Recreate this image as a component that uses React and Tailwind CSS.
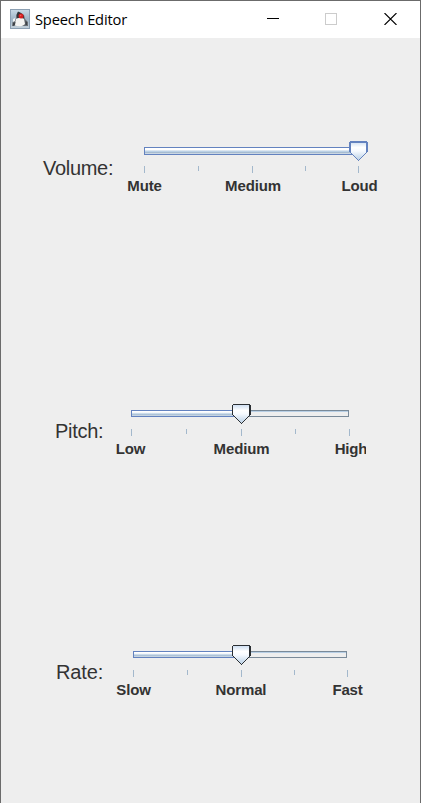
import React from 'react';

function JavaIcon() {
  return (
    <svg width="20" height="20" viewBox="0 0 20 20">
      <defs>
        <linearGradient id="iconBg" x1="0" y1="0" x2="0" y2="1">
          <stop offset="0" stopColor="#c9dae6" />
          <stop offset="0.5" stopColor="#9fb5c6" />
          <stop offset="1" stopColor="#c3d0da" />
        </linearGradient>
      </defs>
      <rect x="0.5" y="0.5" width="19" height="19" fill="url(#iconBg)" stroke="#8b9fb2" />
      <path d="M2 17 L2.5 13 L6 10 L6 6 L8 3 L11 4 L14 6 L15 10 L18 13 L18 17 Z" fill="#686e74" />
      <path d="M8 2.5 L11 4 L14 7 L14 9.5 L7 9.5 L7 5 Z" fill="#33373c" />
      <path d="M6 10 C8 8.6 12 8.6 14 10 L15 15 C12.5 18 8 17.5 4.5 16.5 Z" fill="#f4f4f2" />
      <path d="M3 10 L5 9 L5 12 L3 13 Z" fill="#eef1f2" />
      <path d="M3 14 L5.5 13 L5 16 L3 17 Z M15.5 12 L17 13 L17 16 L15.5 16 Z" fill="#3e4348" />
      <circle cx="11" cy="7" r="2.5" fill="#d81f20" />
      <circle cx="10.6" cy="6.5" r="0.8" fill="#f4605c" />
    </svg>
  );
}

function TitleBar() {
  return (
    <header className="flex h-[37px] shrink-0 items-center bg-white pb-px pl-[9px] pr-[23px]">
      <JavaIcon />
      <h1 className="ml-[5px] flex-1 whitespace-nowrap font-['Open_Sans',sans-serif] text-[14.7px] leading-5 tracking-[-0.18px] text-black">
        Speech Editor
      </h1>
      <div className="flex items-center">
        <svg width="12" height="12" shapeRendering="crispEdges">
          <path d="M0 5.5H12" stroke="#000" />
        </svg>
        <svg className="ml-[46px]" width="12" height="12" shapeRendering="crispEdges">
          <rect x="0.5" y="0.5" width="11" height="11" fill="none" stroke="#ccc" />
        </svg>
        <svg className="ml-[47px]" width="13" height="12" viewBox="0 0 13 12">
          <path d="M0.5 0L12.5 12M12.5 0L0.5 12" stroke="#000" strokeWidth="1.1" />
        </svg>
      </div>
    </header>
  );
}

function Thumb({ id, focused }) {
  const edge = focused ? '#6382bf' : '#2b2f33';
  return (
    <svg width="19" height="20" viewBox="0 0 19 20">
      <defs>
        <linearGradient id={id} x1="0" y1="0" x2="0" y2="1">
          <stop offset="0" stopColor="#cfdff2" />
          <stop offset="0.3" stopColor="#ffffff" />
          <stop offset="0.5" stopColor="#f6faff" />
          <stop offset="1" stopColor="#b8cfe5" />
        </linearGradient>
      </defs>
      <path d="M1 1H17.5V11L9.5 19L1 11Z" fill={`url(#${id})`} />
      <path
        d="M1 0H18V1H1ZM0 1H1V11H0ZM17 1H19V11H17ZM1 11H2V12H1ZM2 12H3V13H2ZM3 13H4V14H3ZM4 14H5V15H4ZM5 15H6V16H5ZM6 16H7V17H6ZM7 17H8V18H7ZM8 18H9V19H8ZM9 19H10V20H9ZM17 11H18V12H17ZM16 12H17V13H16ZM15 13H16V14H15ZM14 14H15V15H14ZM13 15H14V16H13ZM12 16H13V17H12ZM11 17H12V18H11ZM10 18H11V19H10Z"
        fill={edge}
        shapeRendering="crispEdges"
      />
      {focused && <path d="M1 1H18V2H1ZM1 2H2V11H1Z" fill={edge} shapeRendering="crispEdges" />}
    </svg>
  );
}

function Slider({ id, labels, width, track, fill, thumb, focused, tickGap, labelClip = '' }) {
  return (
    <div className={`flex flex-col ${width}`}>
      <div className={`relative flex ${track}`}>
        <div className={`border border-[#6382bf] bg-[linear-gradient(#fff_0%,#fff_25%,#d5e2ee_45%,#b8cfe5_60%,#a3b8cc_78%,#e4ebf2_100%)] ${fill}`} />
        {!focused && <div className="flex-1 border border-l-0 border-[#7a8a99] shadow-[inset_0_1px_0_#b8cfe5]" />}
        <div className={`absolute -top-[6px] ${thumb}`}>
          <Thumb id={id} focused={focused} />
        </div>
      </div>
      <div className={`flex h-[7px] justify-between ${tickGap}`}>
        {[0, 1, 2, 3, 4].map((i) => (
          <span
            key={i}
            className={`w-px bg-[#a3b8cc] ${i % 2 ? 'h-[5px]' : 'h-[7px]'} ${i === 2 ? 'relative left-px' : ''}`}
          />
        ))}
      </div>
      <div className={`mt-1 flex justify-between text-[15px] font-bold leading-[18px] tracking-[-0.15px] ${labelClip}`}>
        {labels.map(([text, nudge]) => (
          <span key={text} className="flex w-px justify-center whitespace-nowrap">
            <span className={nudge}>{text}</span>
          </span>
        ))}
      </div>
    </div>
  );
}

export default function App() {
  return (
    <div className="flex h-[803px] w-[421px] flex-col border-x border-t border-[#6b6b6b] bg-[#eee] font-['Liberation_Sans',Arial,sans-serif] text-[#333]">
      <TitleBar />
      <main className="flex flex-1 flex-col">
        <section className="mt-[109px] flex h-[49px] items-start pl-[42px]">
          <label className="mt-[9px] w-[101px] text-[20px] leading-6 tracking-[-0.3px]">Volume:</label>
          <Slider
            id="volume"
            labels={[['Mute', ''], ['Medium', 'pl-[3px]'], ['Loud', 'pl-0.5']]}
            width="w-[215px]"
            track="h-2"
            fill="w-full"
            thumb="left-[205px]"
            tickGap="mt-[11px]"
            focused
          />
        </section>
        <section className="mt-[214px] flex h-[49px] items-start pl-[54px]">
          <label className="mt-[9px] w-[76px] text-[20px] leading-6 tracking-[-0.3px]">Pitch:</label>
          <Slider
            id="pitch"
            labels={[['Low', 'pr-0.5'], ['Medium', 'pl-0.5'], ['High', 'pl-[3px]']]}
            width="w-[219px]"
            track="h-[7px] w-[218px]"
            fill="w-[110px]"
            thumb="left-[101px]"
            tickGap="mt-3"
            labelClip="[clip-path:inset(0_-16px_-4px_-30px)]"
          />
        </section>
        <section className="mt-[192px] flex h-[49px] items-start pl-[55px]">
          <label className="mt-[9px] w-[77px] text-[20px] leading-6 tracking-[-0.1px]">Rate:</label>
          <Slider
            id="rate"
            labels={[['Slow', ''], ['Normal', 'pl-px'], ['Fast', '']]}
            width="w-[215px]"
            track="h-[7px] w-[214px]"
            fill="w-[108px]"
            thumb="left-[99px]"
            tickGap="mt-3"
          />
        </section>
      </main>
    </div>
  );
}
